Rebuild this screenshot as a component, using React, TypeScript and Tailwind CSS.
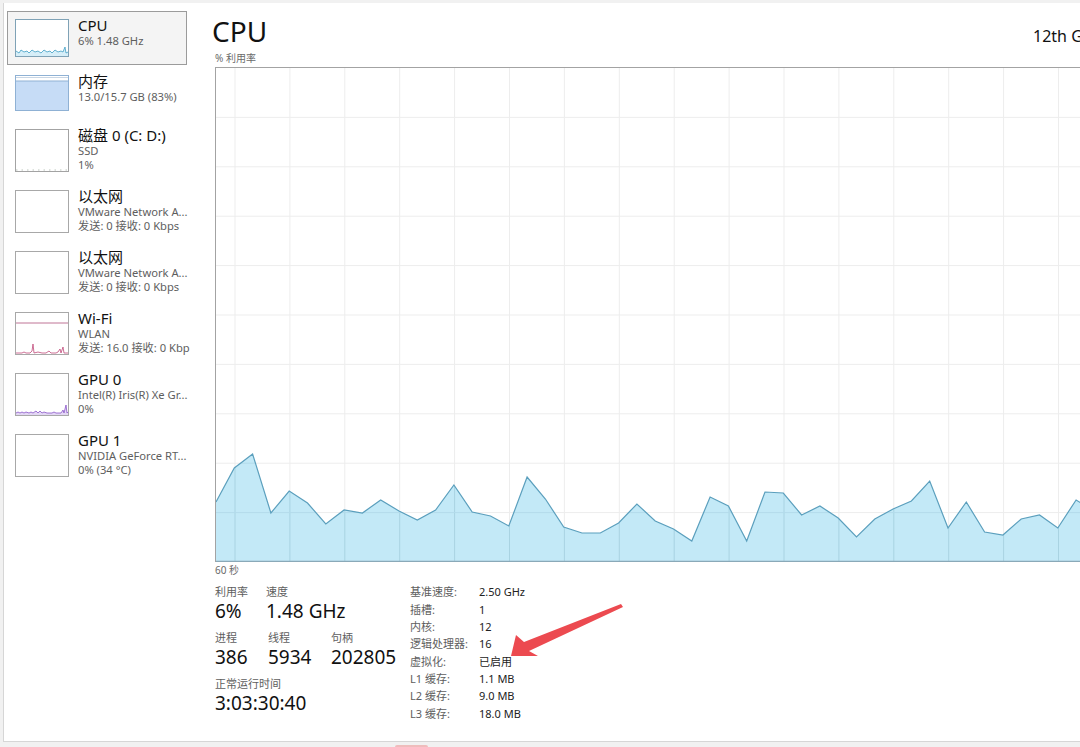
import React from "react";

const F = "font-['Noto_Sans','Noto_Sans_CJK_SC',sans-serif]";

const pts = [501,467,453,512,490,502,523,509,512,499,510,519,509,484,511,515,525,476,498,526,532,532,522,503,520,528,540,496,505,540,491,492,514,505,517,536,518,508,500,480,527,501,531,534,518,514,527,499,510];

function Chart() {
  const W = 880;
  const H = 494;
  const step = 18.3;
  const line = pts.map((y, i) => `${(i * step).toFixed(1)},${y - 67}`).join(" L");
  const lastX = ((pts.length - 1) * step).toFixed(1);
  const area = `M0,${H} L${line} L${lastX},${H} Z`;
  const vlines = Array.from({ length: 16 }, (_, k) => 19 + 54.9 * k);
  const hlines = Array.from({ length: 9 }, (_, k) => 49.4 * (k + 1));
  return (
    <svg width={W} height={H} viewBox={`0 0 ${W} ${H}`} className="block">
      <defs>
        <clipPath id="areaClip">
          <path d={area} />
        </clipPath>
      </defs>
      {vlines.map((x) => (
        <line key={"v" + x} x1={x} y1={0} x2={x} y2={H} stroke="#ededed" strokeWidth="1" />
      ))}
      {hlines.map((y) => (
        <line key={"h" + y} x1={0} y1={y} x2={W} y2={y} stroke="#ededed" strokeWidth="1" />
      ))}
      <path d={area} fill="#c3e9f7" />
      <g clipPath="url(#areaClip)">
        {vlines.map((x) => (
          <line key={"vv" + x} x1={x} y1={0} x2={x} y2={H} stroke="#a9d3e2" strokeWidth="1" />
        ))}
        {hlines.map((y) => (
          <line key={"hh" + y} x1={0} y1={y} x2={W} y2={y} stroke="#b3dbea" strokeWidth="1" />
        ))}
      </g>
      <path d={`M${line}`} fill="none" stroke="#5b9fbd" strokeWidth="1.2" />
      <line x1={0} y1={H - 0.5} x2={W} y2={H - 0.5} stroke="#8aa9b8" strokeWidth="1.5" />
    </svg>
  );
}

function Thumb({ h, border, children }: { h: number; border: string; children?: React.ReactNode }) {
  return (
    <div className="mt-[3px] w-[54px] shrink-0 border bg-white" style={{ height: h, borderColor: border }}>
      <svg width="52" height={h - 2} viewBox={`0 0 52 ${h - 2}`} className="block">
        {children}
      </svg>
    </div>
  );
}

type Item = {
  title: string;
  lines: string[];
  h: number;
  thumbH: number;
  border: string;
  thumb?: React.ReactNode;
  selected?: boolean;
};

const items: Item[] = [
  {
    title: "CPU",
    lines: ["6% 1.48 GHz"],
    h: 54,
    thumbH: 38,
    border: "#7fa2b6",
    selected: true,
    thumb: (
      <>
        <path d="M0,36 L0,31 L3,33 L5,30 L8,32 L11,31 L13,33 L16,30 L19,32 L22,31 L25,33 L28,30 L31,32 L34,31 L36,33 L39,30 L42,32 L45,31 L47,32 L49,27 L50,33 L52,32 L52,36 Z" fill="#d6eef8" />
        <path d="M0,31 L3,33 L5,30 L8,32 L11,31 L13,33 L16,30 L19,32 L22,31 L25,33 L28,30 L31,32 L34,31 L36,33 L39,30 L42,32 L45,31 L47,32 L49,27 L50,33 L52,32" fill="none" stroke="#3f9ec4" strokeWidth="0.8" />
      </>
    ),
  },
  {
    title: "内存",
    lines: ["13.0/15.7 GB (83%)"],
    h: 54,
    thumbH: 36,
    border: "#8fb1d4",
    thumb: (
      <>
        <line x1="0" y1="1.5" x2="52" y2="1.5" stroke="#c9d6e4" strokeWidth="1" />
        <rect x="0" y="5" width="52" height="29" fill="#c6dcf6" />
        <line x1="0" y1="5" x2="52" y2="5" stroke="#8fb1d4" strokeWidth="1" />
      </>
    ),
  },
  {
    title: "磁盘 0 (C: D:)",
    lines: ["SSD", "1%"],
    h: 61,
    thumbH: 43,
    border: "#a3a3a3",
    thumb: <line x1="0" y1="40" x2="52" y2="40" stroke="#a9b5a9" strokeWidth="0.8" strokeDasharray="1.5 4" />,
  },
  {
    title: "以太网",
    lines: ["VMware Network A...", "发送: 0 接收: 0 Kbps"],
    h: 61,
    thumbH: 43,
    border: "#a8a8a8",
  },
  {
    title: "以太网",
    lines: ["VMware Network A...", "发送: 0 接收: 0 Kbps"],
    h: 61,
    thumbH: 43,
    border: "#a8a8a8",
  },
  {
    title: "Wi-Fi",
    lines: ["WLAN", "发送: 16.0 接收: 0 Kbp"],
    h: 61,
    thumbH: 43,
    border: "#a8a8a8",
    thumb: (
      <>
        <line x1="0" y1="10" x2="52" y2="10" stroke="#b8648a" strokeWidth="0.9" />
        <path d="M0,40 L6,40 L8,39 L10,40 L14,40 L16,38 L17,31 L18,40 L22,39 L26,40 L30,40 L33,38 L35,40 L40,40 L42,39 L44,36 L45,40 L47,34 L48,40 L52,40" fill="none" stroke="#c04a7a" strokeWidth="0.8" />
      </>
    ),
  },
  {
    title: "GPU 0",
    lines: ["Intel(R) Iris(R) Xe Gr...", "0%"],
    h: 61,
    thumbH: 43,
    border: "#a8a8a8",
    thumb: (
      <>
        <path d="M0,41 L0,39 L2,38 L4,39 L6,38 L8,39 L10,38 L13,39 L15,38 L17,39 L20,37 L22,39 L24,37 L26,39 L28,38 L31,39 L36,39 L38,38 L40,39 L45,39 L47,36 L48,39 L50,31 L51,39 L52,38 L52,41 Z" fill="#e3d7f4" />
        <path d="M0,39 L2,38 L4,39 L6,38 L8,39 L10,38 L13,39 L15,38 L17,39 L20,37 L22,39 L24,37 L26,39 L28,38 L31,39 L36,39 L38,38 L40,39 L45,39 L47,36 L48,39 L50,31 L51,39 L52,38" fill="none" stroke="#8a55c9" strokeWidth="0.8" />
      </>
    ),
  },
  {
    title: "GPU 1",
    lines: ["NVIDIA GeForce RT...", "0% (34 °C)"],
    h: 61,
    thumbH: 43,
    border: "#a8a8a8",
  },
];

function SideItem({ it }: { it: Item }) {
  return (
    <div
      className={
        "flex w-[180px] border pl-[7px] pt-[4px] " +
        (it.selected ? "border-[#9b9b9b] bg-[#f4f4f4]" : "border-transparent")
      }
      style={{ height: it.h }}
    >
      <Thumb h={it.thumbH} border={it.border}>
        {it.thumb}
      </Thumb>
      <div className="ml-[9px] flex min-w-0 flex-col whitespace-nowrap">
        <div className="text-[15px] leading-[18px] text-[#111]">{it.title}</div>
        {it.lines.map((l, i) => (
          <div key={i} className="text-[11.2px] leading-[14px] text-[#5e5e5e]">
            {l}
          </div>
        ))}
      </div>
    </div>
  );
}

const specs: [string, string][] = [
  ["基准速度:", "2.50 GHz"],
  ["插槽:", "1"],
  ["内核:", "12"],
  ["逻辑处理器:", "16"],
  ["虚拟化:", "已启用"],
  ["L1 缓存:", "1.1 MB"],
  ["L2 缓存:", "9.0 MB"],
  ["L3 缓存:", "18.0 MB"],
];

function Stat({ label, value, w }: { label: string; value: string; w?: string }) {
  return (
    <div className={"flex flex-col whitespace-nowrap " + (w ?? "")}>
      <div className="text-[11px] leading-[15px] text-[#5e5e5e]">{label}</div>
      <div className="text-[19px] leading-[24px] text-[#111]">{value}</div>
    </div>
  );
}

export default function App() {
  return (
    <div className={"relative flex h-[747px] w-[1080px] flex-col overflow-hidden bg-[#f1f1f1] " + F}>
      <div className="ml-[3px] mt-[3px] flex h-[739px] border-b border-l border-[#d6d6d6] bg-white">
        {/* Sidebar */}
        <div className="flex w-[193px] shrink-0 flex-col pl-[3px] pt-[8px]">
          {items.map((it, i) => (
            <div key={i} className={i === 0 ? "mb-[2px]" : ""}>
              <SideItem it={it} />
            </div>
          ))}
        </div>
        {/* Main */}
        <div className="flex min-w-0 flex-1 flex-col overflow-hidden pl-[18px] pt-[8px]">
          <div className="flex h-[40px] items-baseline whitespace-nowrap">
            <div className="-ml-[3px] w-[821px] shrink-0 text-[28px] leading-[40px] text-[#111]">CPU</div>
            <div className="text-[16px] leading-[40px] text-[#111]">12th Gen Intel(R) Core(TM) i5-12500H</div>
          </div>
          <div className="h-[15px] text-[10px] leading-[15px] text-[#6a6a6a]">% 利用率</div>
          <div className="mt-[1px] h-[495px] w-[900px] shrink-0 overflow-hidden border-l border-t border-[#a3a3a3]">
            <Chart />
          </div>
          <div className="h-[16px] text-[10px] leading-[16px] text-[#6a6a6a]">60 秒</div>
          <div className="mt-[6px] flex">
            <div className="flex w-[195px] shrink-0 flex-col gap-[7px]">
              <div className="flex">
                <Stat label="利用率" value="6%" w="w-[51px]" />
                <Stat label="速度" value="1.48 GHz" />
              </div>
              <div className="flex">
                <Stat label="进程" value="386" w="w-[53px]" />
                <Stat label="线程" value="5934" w="w-[63px]" />
                <Stat label="句柄" value="202805" />
              </div>
              <Stat label="正常运行时间" value="3:03:30:40" />
            </div>
            <div className="flex flex-col">
              {specs.map(([k, v]) => (
                <div key={k} className="flex h-[17.35px] items-center whitespace-nowrap text-[11px]">
                  <div className="w-[69px] text-[#5e5e5e]">{k}</div>
                  <div className="text-[#222]">{v}</div>
                </div>
              ))}
            </div>
          </div>
        </div>
      </div>
      <div className="flex h-[5px]">
        <div className="ml-[395px] mt-[3px] h-[2px] w-[33px] rounded-t-[3px] bg-[#efbcbc]" />
      </div>
      {/* Annotation arrow */}
      <svg className="pointer-events-none absolute left-0 top-0" width="1080" height="747" viewBox="0 0 1080 747">
        <polygon
          points="511,656 516,635 524,642 621,604 623,607 529,651 538,656"
          fill="#ec4a50"
        />
      </svg>
    </div>
  );
}
